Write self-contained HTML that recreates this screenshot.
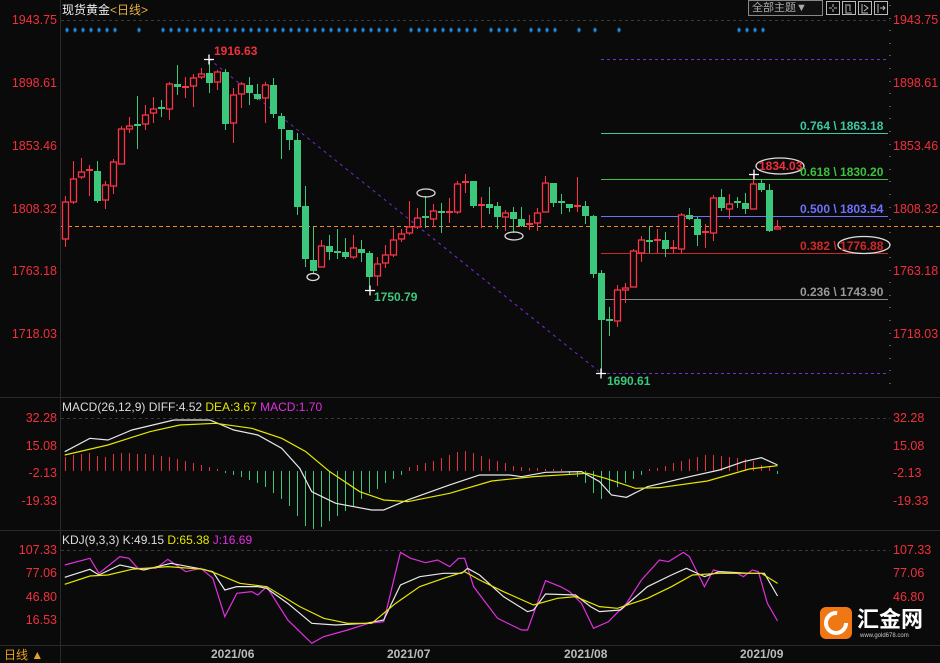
<!DOCTYPE html>
<html><head><meta charset="utf-8">
<style>
html,body{margin:0;padding:0;background:#0a0a0a;width:940px;height:663px;overflow:hidden}
body{position:relative;font-family:"Liberation Sans","Noto Sans CJK SC",sans-serif}
.t{position:absolute;white-space:nowrap;font-size:12px;line-height:12px}
.lab{position:absolute;font-size:12.5px;line-height:13px;color:#f0303c;white-space:nowrap}
.l{left:0;width:57px;text-align:right}
.r{left:893px}
</style></head><body>
<svg id="s" width="940" height="663" style="position:absolute;left:0;top:0" xmlns="http://www.w3.org/2000/svg">
<g stroke="#2a2a2a" stroke-width="1">
<line x1="60.5" y1="0" x2="60.5" y2="663"/>
<line x1="0" y1="397.5" x2="940" y2="397.5"/>
<line x1="0" y1="530.5" x2="940" y2="530.5"/>
<line x1="0" y1="645.5" x2="940" y2="645.5"/>
</g>
<g stroke="#3a3a3a" stroke-dasharray="3,3">
<line x1="61" y1="20.5" x2="890" y2="20.5"/>
<line x1="61" y1="418.5" x2="890" y2="418.5"/>
<line x1="61" y1="550.5" x2="890" y2="550.5"/>
</g>
<!-- fib lines -->
<line x1="601" y1="59.5" x2="888" y2="59.5" stroke="#7a2cd8" stroke-dasharray="3,3"/>
<line x1="601" y1="373.5" x2="888" y2="373.5" stroke="#7a2cd8" stroke-dasharray="3,3"/>
<line x1="601" y1="133.5" x2="888" y2="133.5" stroke="#3cc8a0"/>
<line x1="601" y1="179.5" x2="888" y2="179.5" stroke="#40c040"/>
<line x1="601" y1="216.5" x2="888" y2="216.5" stroke="#7070ff"/>
<line x1="601" y1="253.5" x2="888" y2="253.5" stroke="#c82828"/>
<line x1="601" y1="299.5" x2="888" y2="299.5" stroke="#888"/>
<line x1="61" y1="226.5" x2="940" y2="226.5" stroke="#f08c1e" stroke-dasharray="4,3"/>
<line x1="209" y1="59" x2="601" y2="373" stroke="#7a2cd8" stroke-dasharray="3,4"/>
<g id="candles"></g>
<g id="dots" fill="#1e8ce0"></g>
<g id="hist"></g>
<g id="ticks" fill="#555"></g>
<g stroke="#fff" stroke-width="1.3">
<path d="M204 59.5h10M209 54.5v10M365 290.5h10M370 285.5v10M596 373.5h10M601 368.5v10M749 174.5h10M754 169.5v10"/>
</g>
<g fill="none" stroke="#ddd" stroke-width="1.3">
<ellipse cx="313" cy="277" rx="6" ry="3.5"/>
<ellipse cx="426" cy="193" rx="9" ry="4"/>
<ellipse cx="514" cy="236" rx="9" ry="4"/>
<ellipse cx="780" cy="166" rx="24" ry="8"/>
<ellipse cx="864" cy="245" rx="26" ry="8.5"/>
</g>
<!-- MACD -->
<g transform="translate(0,395) scale(0.5995,0.3333)" fill="none">
<polyline vector-effect="non-scaling-stroke" stroke="#e8e8e8" stroke-width="1.2" points="108,170 150,130 180,135 220,105 290,75 350,75 390,105 430,120 470,160 500,220 520,290 560,325 620,345 640,345 680,315 750,270 800,240 850,240 870,245 910,232 970,230 1000,260 1020,300 1045,307 1080,275 1150,245 1200,225 1240,200 1270,188 1297,210"/>
<polyline vector-effect="non-scaling-stroke" stroke="#e6e600" stroke-width="1.2" points="108,180 180,150 250,110 300,90 360,85 420,100 470,130 510,170 550,230 600,290 640,315 680,320 750,295 820,258 890,245 980,235 1010,250 1060,280 1100,278 1180,258 1250,222 1297,212"/>
</g>
<!-- KDJ -->
<g transform="translate(0,520) scale(0.5995,0.3333)" fill="none">
<polyline vector-effect="non-scaling-stroke" stroke="#e030e0" stroke-width="1.2" points="108,135 150,115 165,160 200,110 215,115 230,145 260,145 280,118 310,155 335,145 355,175 375,290 395,220 420,215 430,225 445,200 480,300 520,370 540,350 580,330 615,310 640,305 668,97 685,115 710,128 730,120 750,140 765,115 775,115 790,200 830,295 870,330 880,330 910,182 935,200 950,215 970,250 990,325 1015,305 1045,250 1070,180 1100,120 1115,125 1140,97 1150,110 1175,200 1190,150 1210,160 1230,160 1240,170 1255,150 1265,155 1280,250 1297,303"/>
<polyline vector-effect="non-scaling-stroke" stroke="#e8e8e8" stroke-width="1.2" points="108,172 150,148 165,165 200,135 240,150 285,130 330,145 355,155 375,210 395,200 430,200 445,205 480,250 520,310 560,315 610,310 640,300 668,195 700,170 740,160 770,160 780,145 800,165 840,230 880,275 890,270 910,222 960,225 985,260 1000,275 1035,270 1080,200 1120,165 1145,145 1175,170 1200,155 1250,160 1275,160 1297,228"/>
<polyline vector-effect="non-scaling-stroke" stroke="#e6e600" stroke-width="1.2" points="108,193 150,168 180,165 220,148 280,140 340,148 360,160 400,190 445,200 500,260 540,295 580,310 620,310 660,250 700,200 740,175 775,155 800,180 840,215 890,255 930,235 960,230 1000,260 1030,265 1080,235 1120,200 1155,165 1200,160 1250,160 1270,160 1297,190"/>
</g>
<!-- toolbar -->
<rect x="748.5" y="0.5" width="74" height="15" fill="#111" stroke="#888"/>
<g fill="none" stroke="#bbb">
<rect x="826.5" y="1.5" width="13" height="13"/>
<rect x="842.5" y="1.5" width="13" height="13"/>
<rect x="858.5" y="1.5" width="13" height="13"/>
<rect x="874.5" y="1.5" width="13" height="13"/>
<path d="M829 8h3M834 8h3M833 4v3M833 9v3M846 4v9h6M847 5h3v6M862 4v9h6M864 5l4 3-4 3M878 4v9M880 8h5M883 6l2 2-2 2"/>
</g>
<!-- logo -->
<rect x="820" y="607" width="32" height="32" rx="6" fill="#f07814"/>
<circle cx="836" cy="623" r="10" fill="none" stroke="#fff" stroke-width="4" stroke-dasharray="48,15"/>
</svg>

<div class="t" style="left:62px;top:4px;color:#eee;font-size:12px">现货黄金<span style="color:#e8b040">&lt;日线&gt;</span></div>
<div class="t" style="left:752px;top:2px;color:#aaa;font-size:11px">全部主题▼</div>

<div class="lab l" style="top:14px">1943.75</div>
<div class="lab l" style="top:77px">1898.61</div>
<div class="lab l" style="top:140px">1853.46</div>
<div class="lab l" style="top:203px">1808.32</div>
<div class="lab l" style="top:265px">1763.18</div>
<div class="lab l" style="top:328px">1718.03</div>
<div class="lab r" style="top:14px">1943.75</div>
<div class="lab r" style="top:77px">1898.61</div>
<div class="lab r" style="top:140px">1853.46</div>
<div class="lab r" style="top:203px">1808.32</div>
<div class="lab r" style="top:265px">1763.18</div>
<div class="lab r" style="top:328px">1718.03</div>

<div class="lab l" style="top:412px">32.28</div>
<div class="lab l" style="top:440px">15.08</div>
<div class="lab l" style="top:467px">-2.13</div>
<div class="lab l" style="top:495px">-19.33</div>
<div class="lab r" style="top:412px">32.28</div>
<div class="lab r" style="top:440px">15.08</div>
<div class="lab r" style="top:467px">-2.13</div>
<div class="lab r" style="top:495px">-19.33</div>

<div class="lab l" style="top:544px">107.33</div>
<div class="lab l" style="top:567px">77.06</div>
<div class="lab l" style="top:591px">46.80</div>
<div class="lab l" style="top:614px">16.53</div>
<div class="lab r" style="top:544px">107.33</div>
<div class="lab r" style="top:567px">77.06</div>
<div class="lab r" style="top:591px">46.80</div>

<div class="t" style="left:214px;top:45px;color:#f0303c;font-weight:bold">1916.63</div>
<div class="t" style="left:374px;top:291px;color:#3cc87c;font-weight:bold">1750.79</div>
<div class="t" style="left:607px;top:375px;color:#3cc87c;font-weight:bold">1690.61</div>
<div class="t" style="left:759px;top:160px;color:#f0303c;font-weight:bold">1834.03</div>
<div class="t" style="left:800px;top:120px;color:#3cc8a0;font-weight:bold">0.764 \ 1863.18</div>
<div class="t" style="left:800px;top:166px;color:#40c040;font-weight:bold">0.618 \ 1830.20</div>
<div class="t" style="left:800px;top:203px;color:#7070ff;font-weight:bold">0.500 \ 1803.54</div>
<div class="t" style="left:800px;top:240px;color:#d02828;font-weight:bold">0.382 \ 1776.88</div>
<div class="t" style="left:800px;top:286px;color:#999;font-weight:bold">0.236 \ 1743.90</div>

<div class="t" style="left:62px;top:401px;color:#ddd">MACD(26,12,9) DIFF:4.52 <span style="color:#e6e600">DEA:3.67</span> <span style="color:#e030e0">MACD:1.70</span></div>
<div class="t" style="left:62px;top:534px;color:#ddd">KDJ(9,3,3) K:49.15 <span style="color:#e6e600">D:65.38</span> <span style="color:#e030e0">J:16.69</span></div>

<div class="t" style="left:211px;top:648px;color:#bbb;font-weight:bold">2021/06</div>
<div class="t" style="left:387px;top:648px;color:#bbb;font-weight:bold">2021/07</div>
<div class="t" style="left:564px;top:648px;color:#bbb;font-weight:bold">2021/08</div>
<div class="t" style="left:740px;top:648px;color:#bbb;font-weight:bold">2021/09</div>
<div class="t" style="left:4px;top:649px;color:#e8a020;font-size:12px">日线 ▲</div>

<div class="t" style="left:857px;top:609px;color:#fff;font-size:22px;line-height:22px;font-weight:bold">汇金网</div>
<div class="t" style="left:860px;top:633px;color:#ccc;font-size:6px;line-height:6px">www.gold678.com</div>

<script>
var C=[["r",202,239,196,247],["r",179,202,161,204],["r",172,177,158,179],["r",170,171,165,196],["g",171,201,161,203],["r",185,200,181,209],["r",162,186,159,194],["r",129,164,126,164],["r",126,129,117,133],["g",125,126,96,149],["r",115,124,105,130],["r",109,113,97,123],["g",108,109,100,117],["r",84,109,82,120],["g",84,87,65,95],["r",87,88,77,98],["r",78,86,74,107],["r",74,77,68,79],["g",73,83,59,93],["r",72,82,70,90],["g",72,124,69,130],["r",95,123,88,143],["r",84,94,82,108],["g",85,93,77,105],["g",94,99,84,100],["r",85,98,82,123],["g",85,114,78,118],["g",116,129,113,159],["g",130,140,130,150],["g",140,207,133,215],["g",206,259,186,267],["g",260,271,227,274],["r",246,267,240,267],["g",246,252,235,260],["g",252,253,229,259],["g",252,257,238,259],["r",248,257,235,259],["g",249,253,240,262],["g",253,277,251,290],["r",264,276,257,286],["r",255,263,245,268],["r",240,255,228,257],["r",234,239,229,242],["r",227,233,201,235],["r",218,227,208,229],["g",217,218,196,228],["r",211,219,204,227],["g",212,213,203,233],["r",212,213,198,223],["r",184,212,181,214],["r",182,183,174,193],["g",181,206,181,208],["r",205,206,197,228],["g",204,208,187,214],["g",206,217,202,229],["r",213,217,210,231],["g",212,219,207,233],["g",219,226,207,227],["r",224,225,215,230],["r",213,223,208,231],["r",183,212,176,212],["g",183,203,183,207],["g",202,203,194,214],["g",204,208,204,212],["r",206,207,177,212],["g",206,216,201,224],["g",216,274,215,278],["g",273,320,270,375],["g",320,321,307,336],["r",290,321,285,327],["r",288,290,283,303],["r",251,287,249,287],["r",240,253,236,262],["g",240,242,227,253],["r",240,241,229,253],["g",240,249,232,257],["r",248,249,240,253],["r",215,249,213,253],["g",215,219,208,220],["g",219,235,217,246],["r",232,233,224,248],["r",198,233,195,241],["g",197,208,189,211],["r",204,209,194,219],["g",202,203,197,208],["g",203,209,193,214],["r",184,209,174,209],["g",183,190,180,192],["g",190,231,184,232],["r",227,229,220,229]];
var RED="#ff3348",GRN="#3cc87c",h="";
C.forEach(function(c,i){var x=65.5+8*i,col=c[0]=="r"?RED:GRN,t=c[1],b=c[2];
h+='<line x1="'+x+'" y1="'+c[3]+'" x2="'+x+'" y2="'+c[4]+'" stroke="'+col+'"/>';
if(b-t<2){h+='<rect x="'+(x-3.5)+'" y="'+(t-1)+'" width="7" height="2" fill="'+col+'"/>';}
else if(c[0]=="r"){h+='<rect x="'+(x-3)+'" y="'+t+'" width="6" height="'+(b-t)+'" fill="#0a0a0a" stroke="'+col+'" stroke-width="1.3"/>';}
else{h+='<rect x="'+(x-3.5)+'" y="'+t+'" width="7" height="'+(b-t)+'" fill="'+col+'"/>';}
});
document.getElementById("candles").innerHTML=h;
var d="",xs=[67,75,83,91,99,107,115,139];for(var x=163;x<=395;x+=8)xs.push(x);for(x=411;x<=475;x+=8)xs.push(x);for(x=491;x<=515;x+=8)xs.push(x);for(x=531;x<=555;x+=8)xs.push(x);xs.push(579,595,619,739,747,755,763);
xs.forEach(function(x){d+='<rect x="'+(x-1.5)+'" y="28.5" width="3" height="3"/><rect x="'+(x-0.5)+'" y="27.5" width="1" height="5"/>';});
document.getElementById("dots").innerHTML=d;
var H=[14,16,17,18,15,14,17,18,18,17,17,16,15,14,12,10,8,6,4,2,-2,-4,-6,-9,-12,-16,-22,-28,-35,-45,-55,-58,-56,-50,-45,-40,-35,-28,-22,-18,-12,-8,-4,4,6,8,10,13,16,19,20,18,15,12,10,8,5,4,3,3,2,2,2,-3,-6,-12,-22,-28,-22,-16,-12,-8,-4,2,3,5,8,10,12,14,16,16,15,14,13,12,10,6,4,-3];
var hh="";H.forEach(function(v,i){var x=65.5+8*i;if(v>0)hh+='<line x1="'+x+'" y1="'+(471-v)+'" x2="'+x+'" y2="471" stroke="#e83040"/>';else hh+='<line x1="'+x+'" y1="471" x2="'+x+'" y2="'+(471-v)+'" stroke="#3cc87c"/>';});
document.getElementById("hist").innerHTML=hh;
var tk="";for(var y=5;y<395;y+=12.6)tk+='<rect x="889" y="'+y.toFixed(0)+'" width="2" height="1"/>';document.getElementById("ticks").innerHTML=tk;
</script>
</body></html>
